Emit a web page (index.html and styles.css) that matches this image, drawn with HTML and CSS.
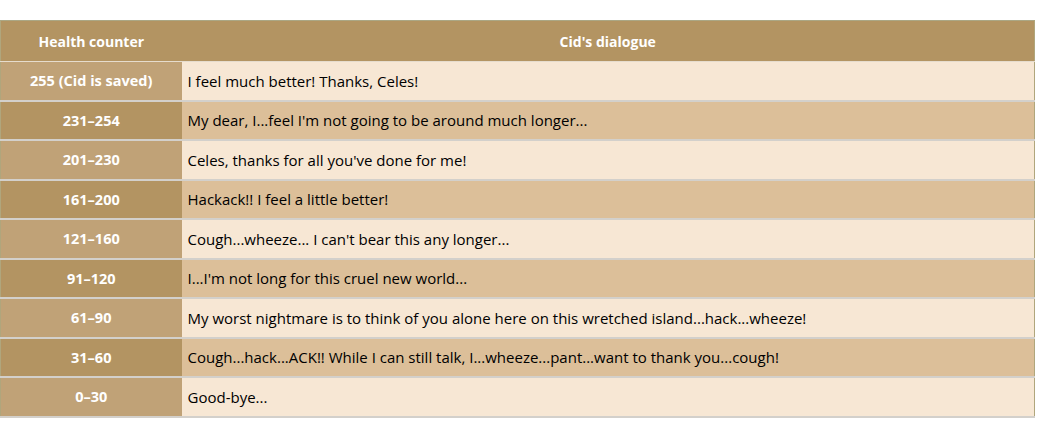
FILE: index.html
```html
<!DOCTYPE html>
<html>
<head>
<meta charset="utf-8">
<link rel="stylesheet" href="styles.css">
</head>
<body>
<div class="wrap">
<table class="tbl">
<thead>
<tr><th class="c1">Health counter</th><th>Cid's dialogue</th></tr>
</thead>
<tbody>
<tr class="odd"><td class="hp">255 (Cid is saved)</td><td>I feel much better! Thanks, Celes!</td></tr>
<tr class="even"><td class="hp">231–254</td><td>My dear, I...feel I'm not going to be around much longer...</td></tr>
<tr class="odd"><td class="hp">201–230</td><td>Celes, thanks for all you've done for me!</td></tr>
<tr class="even"><td class="hp">161–200</td><td>Hackack!! I feel a little better!</td></tr>
<tr class="odd"><td class="hp">121–160</td><td>Cough...wheeze... I can't bear this any longer...</td></tr>
<tr class="even"><td class="hp">91–120</td><td>I...I'm not long for this cruel new world...</td></tr>
<tr class="odd"><td class="hp">61–90</td><td>My worst nightmare is to think of you alone here on this wretched island...hack...wheeze!</td></tr>
<tr class="even"><td class="hp">31–60</td><td>Cough...hack...ACK!! While I can still talk, I...wheeze...pant...want to thank you...cough!</td></tr>
<tr class="odd last"><td class="hp">0–30</td><td>Good-bye...</td></tr>
</tbody>
</table>
</div>
</body>
</html>
```
FILE: styles.css
```css
html, body {
  margin: 0;
  padding: 0;
  background: #ffffff;
}
.wrap {
  padding: 20px 0 0 0;
}
.tbl {
  width: 1035px;
  border-collapse: collapse;
  font-family: "Open Sans", "DejaVu Sans", sans-serif;
  font-size: 14px;
  color: #000;
  border-top: 1px solid #aba784;
  border-left: 1px solid #b0a67c;
  border-right: 1px solid #b0a67c;
}
.tbl th {
  background: #b39462;
  color: #fff;
  font-weight: 700;
  height: 41px;
  padding: 0 6px;
  text-align: center;
  border-bottom: 1px solid #e6dccd;
  box-sizing: border-box;
}
.tbl th.c1 {
  width: 181px;
}
.tbl td {
  height: 37.5px;
  padding: 0 6px;
  font-size: 15px;
  border-bottom: 2px solid #d3d0cb;
  box-sizing: content-box;
}
.tbl td.hp {
  text-align: center;
  color: #fff;
  font-weight: 700;
  font-size: 14.5px;
  width: 168px;
}
.tbl tr.odd td { background: #f7e7d4; }
.tbl tr.even td { background: #dcbf99; }
.tbl tr.odd td.hp { background: #c0a277; }
.tbl tr.even td.hp { background: #b39462; }
```
